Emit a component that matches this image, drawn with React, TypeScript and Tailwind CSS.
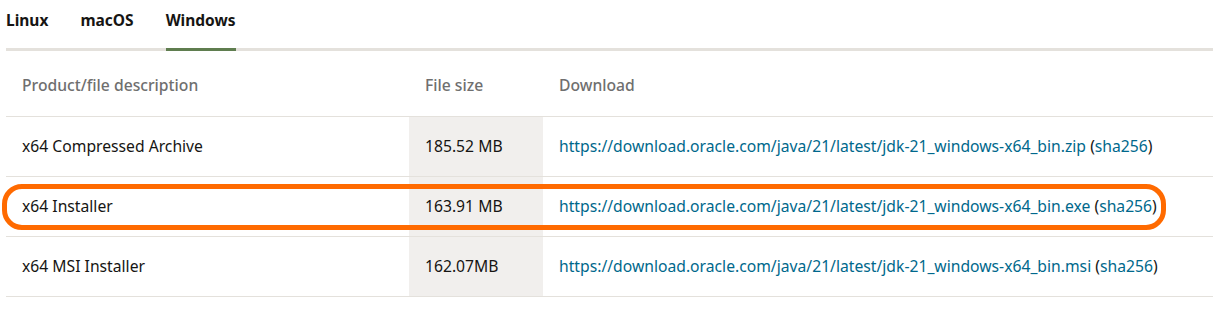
const rows = [
  {
    name: "x64 Compressed Archive",
    size: "185.52 MB",
    url: "https://download.oracle.com/java/21/latest/jdk-21_windows-x64_bin.zip",
  },
  {
    name: "x64 Installer",
    size: "163.91 MB",
    url: "https://download.oracle.com/java/21/latest/jdk-21_windows-x64_bin.exe",
    marked: true,
  },
  {
    name: "x64 MSI Installer",
    size: "162.07MB",
    url: "https://download.oracle.com/java/21/latest/jdk-21_windows-x64_bin.msi",
  },
];

const tabs = ["Linux", "macOS", "Windows"];

export default function App() {
  return (
    <div className="w-[1213px] h-[336px] bg-white pl-[6px] text-[15.7px] text-[#161513] font-['Noto_Sans',sans-serif]">
      {/* Tabs */}
      <div className="flex gap-8 h-[51px] border-b-[3px] border-[#e4e1dc]">
        {tabs.map((t) => (
          <div
            key={t}
            className={`pt-[9px] font-bold text-[15.5px] ${
              t === "Windows" ? "border-b-[3px] border-[#5f7d4f] -mb-[3px]" : ""
            }`}
          >
            {t}
          </div>
        ))}
      </div>

      {/* Table */}
      <table className="border-collapse w-[1207px]">
        <thead>
          <tr className="h-[65px] border-b border-[#e4e1dc]">
            <th className="text-left font-medium text-[#6f6f6f] pl-4 pt-[6px] w-[403px]">
              Product/file description
            </th>
            <th className="text-left font-medium text-[#6f6f6f] pl-4 pt-[6px] w-[134px]">
              File size
            </th>
            <th className="text-left font-medium text-[#6f6f6f] pl-4 pt-[6px]">Download</th>
          </tr>
        </thead>
        <tbody>
          {rows.map((r) => (
            <tr key={r.name} className="h-[60px] border-b border-[#e4e1dc]">
              <td className="pl-4 pt-[2px] relative">
                {r.marked && (
                  <div className="absolute left-[-4px] top-[7px] w-[1164px] h-[46px] border-[5px] border-[#ff6a00] rounded-[20px] pointer-events-none" />
                )}
                {r.name}
              </td>
              <td className="pl-4 pt-[2px] bg-[#f1efed]">{r.size}</td>
              <td className="pl-4 pt-[2px]">
                <span className="text-[#00688c]">{r.url}</span>{" "}
                (<span className="text-[#00688c]">sha256</span>)
              </td>
            </tr>
          ))}
        </tbody>
      </table>
    </div>
  );
}
